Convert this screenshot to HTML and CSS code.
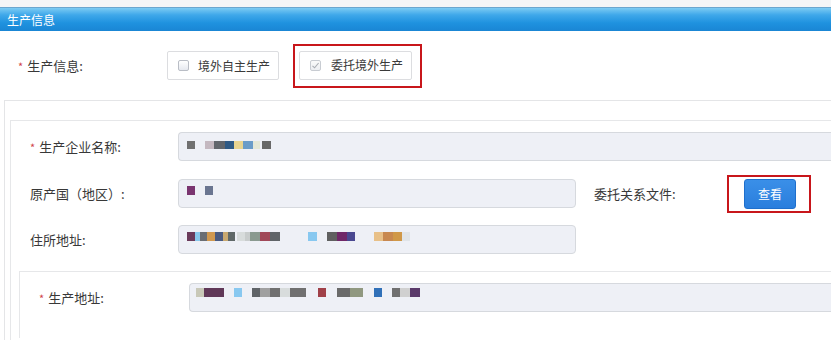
FILE: index.html
```html
<!DOCTYPE html>
<html lang="zh-CN">
<head>
<meta charset="utf-8">
<title>生产信息</title>
<link rel="stylesheet" href="styles.css">
</head>
<body>
<div class="topstrip"></div>
<div class="header"><span class="title">生产信息</span></div>

<div class="prod-row">
  <div class="label prod-label"><span class="req">*</span>生产信息:</div>
  <label class="check-box"><span class="cb"></span><span class="cb-text">境外自主生产</span></label>
  <div class="highlight hl-check">
    <label class="check-box check-box-b"><span class="cb cb-checked"><svg width="9" height="9" viewBox="0 0 9 9"><path d="M1.5 4.8 L3.6 6.8 L7.6 2" fill="none" stroke="#a9adb3" stroke-width="1.1"/></svg></span><span class="cb-text">委托境外生产</span></label>
  </div>
</div>

<div class="outer">
  <div class="inner">
    <div class="row">
      <div class="label"><span class="req">*</span>生产企业名称:</div>
      <div class="field field-wide field-a">
        <svg width="90" height="8">
          <rect x="0" width="8" height="8" fill="#707070"/>
          <rect x="18" width="9" height="8" fill="#c4b8c0"/>
          <rect x="27" width="11" height="8" fill="#62666c"/>
          <rect x="38" width="9" height="8" fill="#2f5a85"/>
          <rect x="47" width="9" height="8" fill="#e8d490"/>
          <rect x="56" width="10" height="8" fill="#6a9cc8"/>
          <rect x="66" width="7" height="8" fill="#e4e8d6"/>
          <rect x="75" width="9" height="8" fill="#686868"/>
        </svg>
      </div>
    </div>
    <div class="row">
      <div class="label">原产国（地区）:</div>
      <div class="field field-mid">
        <svg width="30" height="9">
          <rect x="0" width="8" height="9" fill="#7a3570"/>
          <rect x="18" width="8" height="9" fill="#6a7590"/>
        </svg>
      </div>
      <div class="label label-side">委托关系文件:</div>
      <div class="highlight hl-btn"><button class="btn">查看</button></div>
    </div>
    <div class="row">
      <div class="label">住所地址:</div>
      <div class="field field-mid">
        <svg width="230" height="9">
          <rect x="0" width="8" height="9" fill="#6a3a5a"/>
          <rect x="8" width="5" height="9" fill="#88c8ec"/>
          <rect x="13" width="7" height="9" fill="#6a6e74"/>
          <rect x="20" width="8" height="9" fill="#d09850"/>
          <rect x="28" width="8" height="9" fill="#4a5a80"/>
          <rect x="36" width="5" height="9" fill="#c8a870"/>
          <rect x="41" width="7" height="9" fill="#606868"/>
          <rect x="50" width="8" height="9" fill="#d8dcdc"/>
          <rect x="58" width="5" height="9" fill="#c8cccc"/>
          <rect x="63" width="10" height="9" fill="#8a9a90"/>
          <rect x="73" width="10" height="9" fill="#a04858"/>
          <rect x="83" width="10" height="9" fill="#606468"/>
          <rect x="121" width="9" height="9" fill="#88c8f0"/>
          <rect x="140" width="10" height="9" fill="#606060"/>
          <rect x="150" width="10" height="9" fill="#702868"/>
          <rect x="160" width="8" height="9" fill="#4a4890"/>
          <rect x="187" width="9" height="9" fill="#e8c088"/>
          <rect x="196" width="10" height="9" fill="#c88850"/>
          <rect x="206" width="9" height="9" fill="#d09848"/>
          <rect x="215" width="8" height="9" fill="#e0e4e8"/>
        </svg>
      </div>
    </div>
    <div class="inner2">
      <div class="row row-last">
        <div class="label label-wide"><span class="req">*</span>生产地址:</div>
        <div class="field field-wide field-d">
          <svg width="230" height="9">
            <rect x="0" width="8" height="9" fill="#c8c8b8"/>
            <rect x="8" width="20" height="9" fill="#603858"/>
            <rect x="38" width="8" height="9" fill="#88c8f0"/>
            <rect x="56" width="8" height="9" fill="#606468"/>
            <rect x="64" width="10" height="9" fill="#a0a0a0"/>
            <rect x="74" width="10" height="9" fill="#707070"/>
            <rect x="84" width="10" height="9" fill="#d8dcdc"/>
            <rect x="94" width="16" height="9" fill="#707070"/>
            <rect x="122" width="8" height="9" fill="#a04048"/>
            <rect x="141" width="13" height="9" fill="#6a6a6a"/>
            <rect x="154" width="13" height="9" fill="#909880"/>
            <rect x="178" width="8" height="9" fill="#3070b8"/>
            <rect x="196" width="8" height="9" fill="#707070"/>
            <rect x="204" width="10" height="9" fill="#d0d0d0"/>
            <rect x="214" width="10" height="9" fill="#5a3a6a"/>
          </svg>
        </div>
      </div>
    </div>
  </div>
</div>
</body>
</html>
```

FILE: styles.css
```css
*, *::before, *::after {
  box-sizing: border-box;
}

html, body {
  margin: 0;
  padding: 0;
  overflow: hidden;
  background: #ffffff;
}

body {
  width: 831px;
  height: 340px;
  font-family: "Noto Sans CJK SC", "Noto Sans", "Liberation Sans", sans-serif;
  font-size: 13px;
  color: #383838;
}

.topstrip {
  height: 7px;
  background: #f3f5f7;
}

.header {
  height: 24px;
  border-top: 1px solid #6aa6cf;
  background: linear-gradient(to bottom, #7ccbf3 0%, #3fa8ea 30%, #1f92df 65%, #1a86d4 100%);
  display: flex;
  align-items: center;
  padding-left: 7px;
}

.title {
  color: #ffffff;
  font-size: 12px;
  line-height: 14px;
}

.prod-row {
  height: 69px;
  display: flex;
  align-items: center;
  padding-left: 18px;
}

.label {
  flex: none;
  width: 148px;
  line-height: 16px;
  white-space: nowrap;
}

.prod-label {
  width: 149px;
}

.req {
  color: #d0434a;
  font-size: 11px;
  margin-right: 4px;
}

.check-box {
  flex: none;
  width: 112px;
  height: 29px;
  border: 1px solid #dcdde0;
  border-radius: 2px;
  background: #ffffff;
  display: flex;
  align-items: center;
  padding-left: 10px;
  font-size: 12px;
}

.check-box-b {
  width: 113px;
}

.cb {
  width: 11px;
  height: 11px;
  border: 1px solid #b9bdc5;
  border-radius: 2px;
  background: linear-gradient(to bottom, #ffffff, #e6e9ef);
  margin-right: 9px;
  display: flex;
  align-items: center;
  justify-content: center;
}

.cb-checked {
  border-color: #c8ccd2;
  background: linear-gradient(to bottom, #fafafa, #eceef2);
  margin-right: 10px;
}

.cb-text {
  line-height: 14px;
  color: #3a3a3a;
}

.highlight {
  flex: none;
  border: 2px solid #c8161b;
}

.hl-check {
  margin-left: 14px;
  padding: 5px 8px 6px 4px;
  display: flex;
}

.outer {
  width: 827px;
  height: 240px;
  margin-left: 4px;
  border-top: 1px solid #e4e5e7;
  border-left: 1px solid #e4e5e7;
  padding: 19px 0 0 5px;
}

.inner {
  height: 220px;
  border-top: 1px solid #e6e7e9;
  border-left: 1px solid #e6e7e9;
  padding: 11px 0 0 8px;
}

.row {
  height: 29px;
  display: flex;
  align-items: center;
  padding-left: 11px;
  margin-bottom: 18px;
}

.row + .row {
  margin-bottom: 17px;
}

.row-last {
  padding-left: 19px;
  margin-bottom: 0;
}

.label-wide {
  width: 150px;
}

.field {
  flex: none;
  height: 29px;
  border: 1px solid #d6d9de;
  border-radius: 4px;
  background: #eef0f6;
  display: flex;
  align-items: flex-start;
  padding: 6px 0 0 8px;
}

.field svg {
  display: block;
}

.field-wide {
  flex: 1;
  border-right: none;
  border-top-right-radius: 0;
  border-bottom-right-radius: 0;
}

.field-mid {
  width: 398px;
}

.field-a {
  padding-top: 8px;
}

.field-d {
  padding: 4px 0 0 6px;
}

.label-side {
  width: 133px;
  margin-left: 18px;
}

.hl-btn {
  padding: 2px 13px 2px 15px;
  display: flex;
}

.btn {
  width: 52px;
  height: 30px;
  border: 1px solid #1f6fcc;
  border-radius: 3px;
  background: linear-gradient(to bottom, #3a8fe8, #2a7edd);
  color: #ffffff;
  font-family: "Noto Sans CJK SC", "Noto Sans", sans-serif;
  font-size: 12px;
  padding: 0;
}

.inner2 {
  height: 67px;
  border-top: 1px solid #e6e7e9;
  border-left: 1px solid #e6e7e9;
  padding-top: 11px;
}
```
